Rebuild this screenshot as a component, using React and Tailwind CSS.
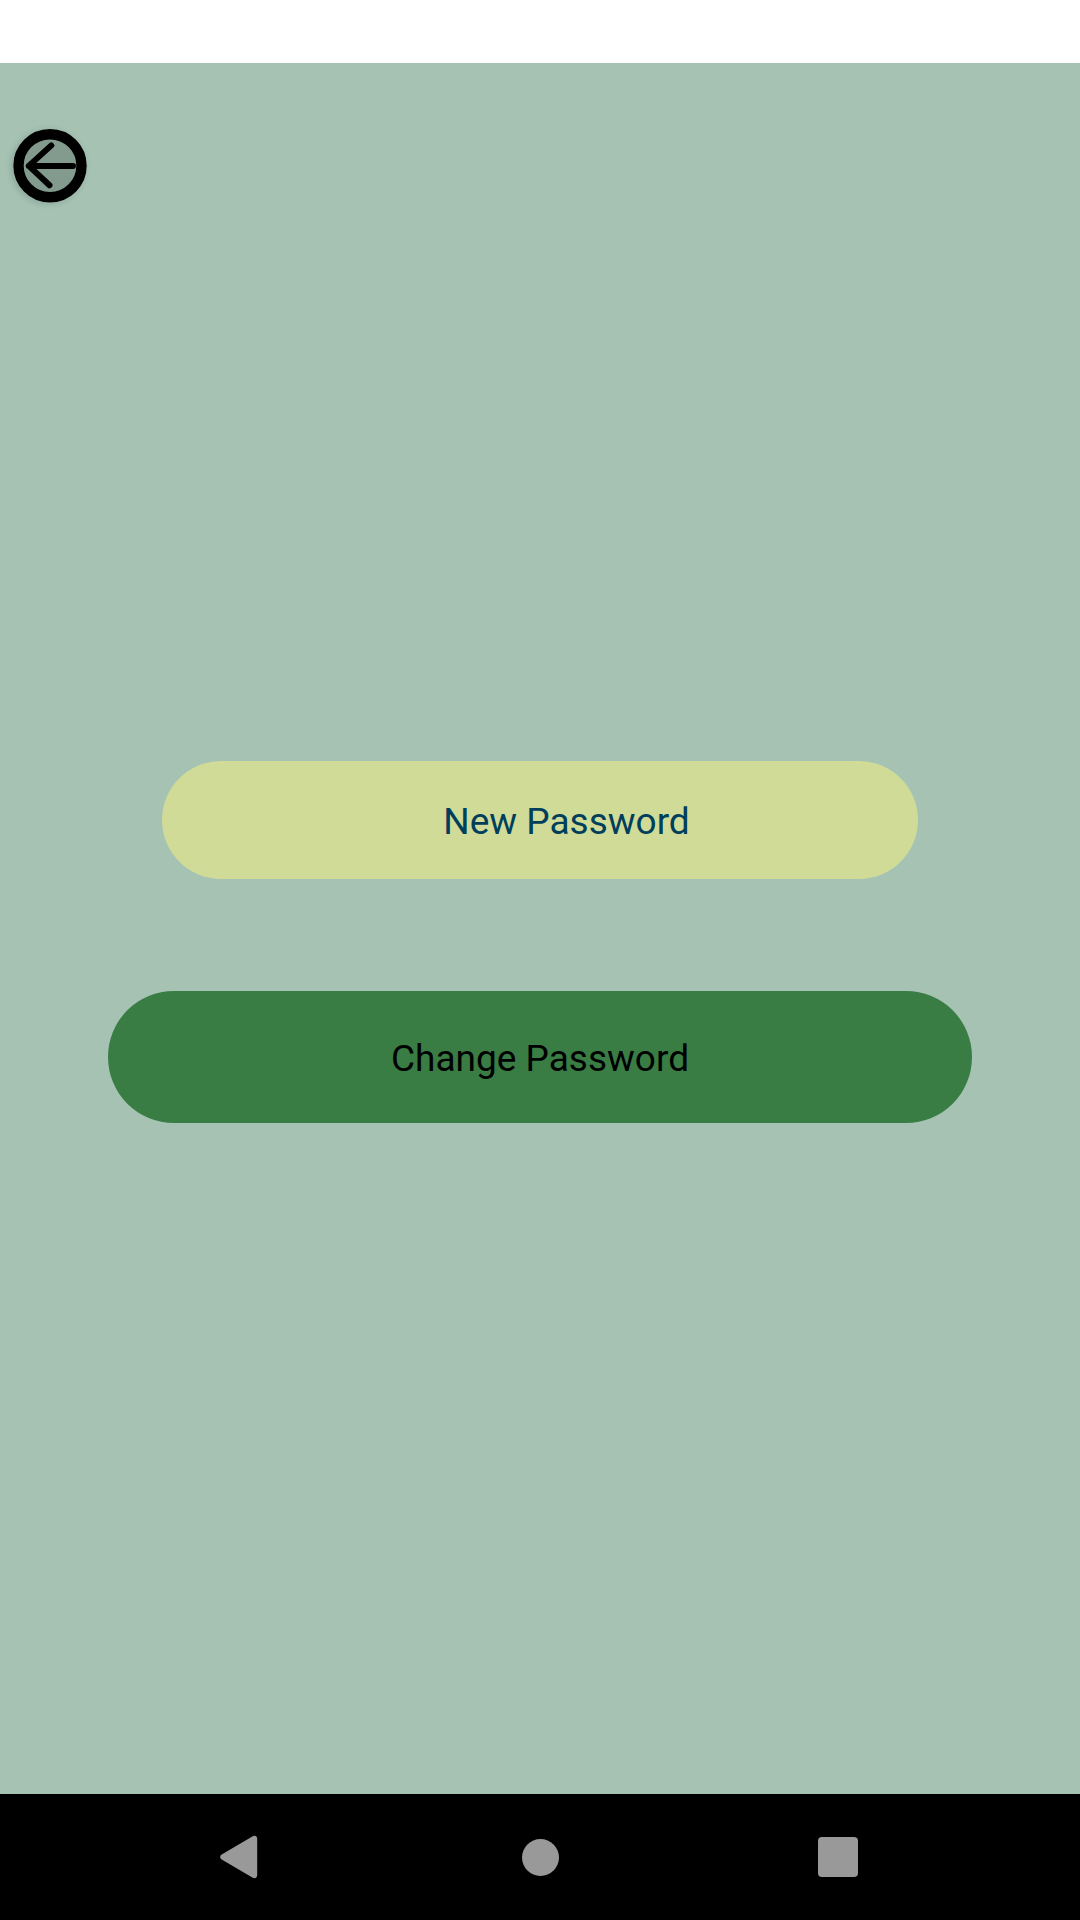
function BackButton() {
  return (
    <button aria-label="Back" className="mt-[66px] ml-[13px] block size-[74px] rounded-full shadow-[-2px_1px_6px_rgba(0,0,0,0.14)]">
      <svg viewBox="0 0 74 74" className="block size-full overflow-visible" fill="none" stroke="#000" strokeLinecap="round" strokeLinejoin="round">
        <circle cx="37" cy="36.7" r="31.5" fill="#829b8e" strokeWidth="10.4" />
        <path d="M60 36.9H15.8M38.3 16.4L15.8 36.9L36.5 56.2" strokeWidth="6" />
      </svg>
    </button>
  );
}

function NavigationBar() {
  return (
    <nav className="grid h-[126px] shrink-0 grid-cols-[240px_600px_240px] bg-black">
      <div className="flex items-center justify-end">
        <svg viewBox="0 0 38 44" className="mt-[-1px] mr-[-18px] h-[44px] w-[38px]" fill="#999">
          <path d="M1.7 19.5L32.3 1.5C35 0 37.2 1.2 37.2 4V40C37.2 42.8 35 44 32.3 42.5L1.7 24.5C-.3 23.3-.3 20.7 1.7 19.5Z" />
        </svg>
      </div>
      <div className="flex items-center justify-center">
        <div className="mt-[1px] size-[37px] rounded-full bg-[#999]" />
      </div>
      <div className="flex items-center">
        <div className="ml-[-22px] size-[40px] rounded-[4px] bg-[#999]" />
      </div>
    </nav>
  );
}

export default function App() {
  return (
    <div className="flex h-[1920px] w-[1080px] flex-col overflow-hidden bg-[#a5c2b3] font-['Roboto',sans-serif]">
      <div className="h-[63px] shrink-0 bg-white" />
      <main className="flex-1">
        <BackButton />
        <div className="mt-[558px] flex flex-col items-center gap-[112px]">
          <div className="flex h-[118px] w-[756px] items-center justify-center rounded-full bg-[#d0db97] pt-[2px] pl-[53px] text-[37px] leading-none text-[#003f5c]">
            New Password
          </div>
          <button className="flex h-[132px] w-[864px] items-center justify-center rounded-full bg-[#3a7d44] pt-[2px] text-[37px] leading-none text-black">
            Change Password
          </button>
        </div>
      </main>
      <NavigationBar />
    </div>
  );
}
